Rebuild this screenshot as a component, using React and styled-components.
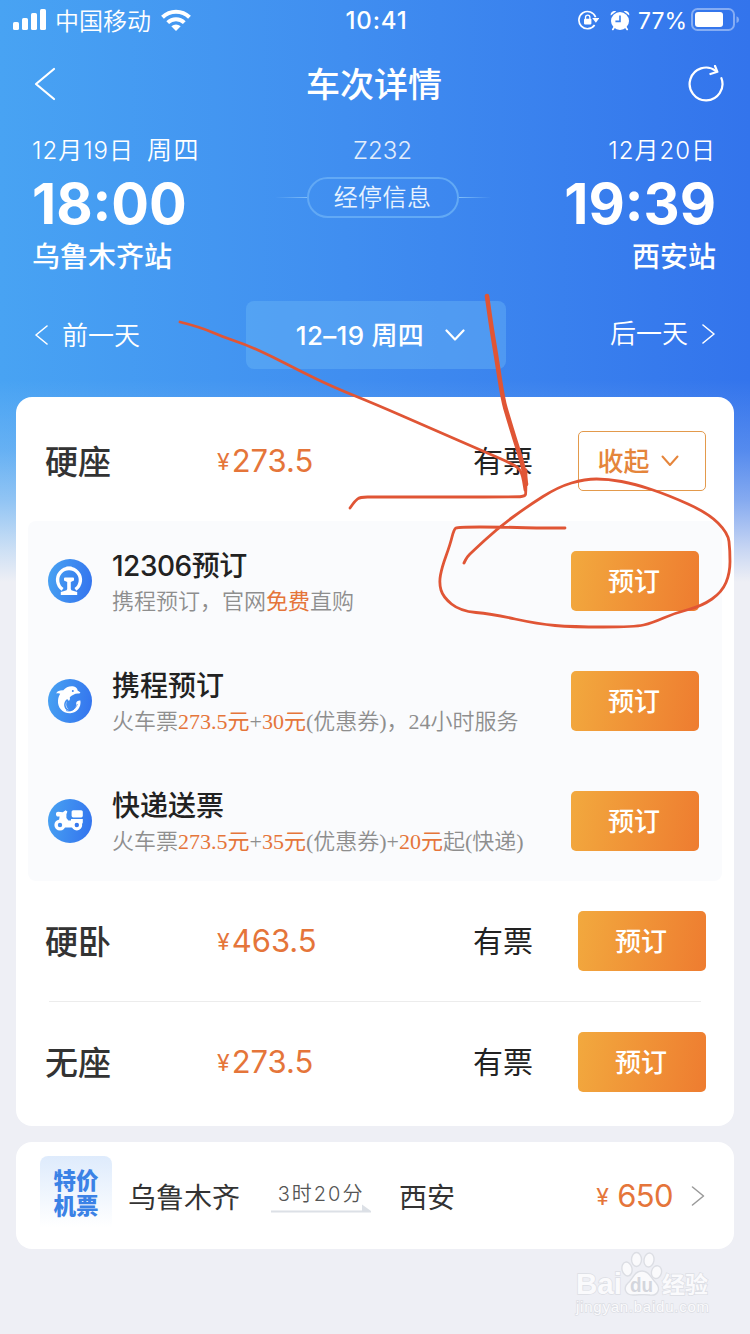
import React from 'react';
import styled, { createGlobalStyle } from 'styled-components';

const options = [
  {
    icon: 'rail',
    title: '12306预订',
    spacing: '-0.5px',
    text: [['携程预订，官网'], ['免费', true], ['直购']]
  },
  {
    icon: 'dolphin',
    title: '携程预订',
    text: [['火车票'], ['273.5元', true], ['+'], ['30元', true], ['(优惠券)，24小时服务']]
  },
  {
    icon: 'scooter',
    title: '快递送票',
    text: [['火车票'], ['273.5元', true], ['+'], ['35元', true], ['(优惠券)+'], ['20元', true], ['起(快递)']]
  }
];

const seats = [
  { name: '硬卧', price: '463.5' },
  { name: '无座', price: '273.5' }
];

const strokes = [
  [[180, 322], [200, 327], [223, 337], [247, 345], [273, 357], [300, 371], [333, 387], [375, 404], [430, 428], [485, 452], [515, 465], [522, 472], [525, 490]],
  [[526, 470], [526, 493], [525, 496], [518, 497], [450, 497], [375, 497], [360, 497], [355, 501], [350, 508]],
  [[565, 528], [532, 528], [502, 527], [458, 527], [454, 529], [450, 545], [442, 567], [439, 583], [443, 597], [460, 611], [492, 614], [538, 624], [572, 627], [635, 627], [652, 623], [675, 613], [702, 606], [722, 592], [730, 573], [730, 550], [728, 533], [708, 513], [668, 495], [635, 484], [608, 479], [585, 479], [558, 487], [528, 506], [498, 528], [472, 552], [467, 557], [464, 563]]
];
const arrowSide = [[487, 296], [491, 325], [496, 355], [503, 400], [508, 417], [515, 440], [523, 465], [526, 484]];

// smooth a list of points with quadratic segments through their midpoints
const toPath = (points) => {
  const last = points[points.length - 1];
  const mid = points.slice(1, -1).map(([x, y], i) => {
    const [nx, ny] = points[i + 2];
    return `Q${x} ${y} ${(x + nx) / 2} ${(y + ny) / 2}`;
  });
  return `M${points[0].join(' ')} ${mid.join(' ')} L${last.join(' ')}`;
};

const Chevron = ({ d, width, height, stroke = 2 }) => (
  <svg width={ width } height={ height } viewBox={ `0 0 ${width} ${height}` } fill="none" stroke="currentColor" strokeWidth={ stroke } strokeLinecap="round" strokeLinejoin="round">
    <path d={ d } />
  </svg>
);

const Signal = () => (
  <svg width="34" height="22" viewBox="0 0 34 22" fill="#fff">
    <rect x="0" y="13" width="6" height="8" rx="1.6" />
    <rect x="9" y="9" width="6" height="12" rx="1.6" />
    <rect x="18" y="4" width="6" height="17" rx="1.6" />
    <rect x="27" y="0" width="6" height="21" rx="1.6" />
  </svg>
);

const Wifi = () => (
  <svg width="30" height="22" viewBox="0 0 30 22" fill="none" stroke="#fff" strokeWidth="4">
    <path d="M1.5 8.3A19.4 19.4 0 0 1 28.5 8.3" />
    <path d="M6.7 13.6A12 12 0 0 1 23.3 13.6" />
    <path d="M10.3 17.2Q15 13.6 19.7 17.2L15 22Z" fill="#fff" stroke="none" />
  </svg>
);

const RotationLock = () => (
  <svg width="21" height="20" viewBox="0 0 21 20" fill="none" stroke="#fff" strokeWidth="1.7">
    <path d="M17.6 7.2A8.6 8.6 0 1 0 16.6 15" />
    <path d="M14.2 8H21.4L17.9 12.8Z" fill="#fff" stroke="none" />
    <rect x="6" y="8.8" width="7.4" height="5.6" rx="0.8" fill="#fff" stroke="none" />
    <path d="M7.5 9V7.4a2.2 2.2 0 0 1 4.4 0V9" strokeWidth="1.3" />
  </svg>
);

const Alarm = () => (
  <svg width="20" height="21" viewBox="0 0 20 21">
    <path d="M4.4 17L2.8 19.4M15.6 17L17.2 19.4" stroke="#fff" strokeWidth="1.8" strokeLinecap="round" />
    <path d="M0.8 5.6C0 2.6 3 0 6.3 1.2ZM19.2 5.6C20 2.6 17 0 13.7 1.2Z" fill="#fff" />
    <circle cx="10" cy="11" r="9" fill="#fff" />
    <path d="M10 5.6V11.4H5.4" fill="none" stroke="#3a80ee" strokeWidth="1.6" />
  </svg>
);

const Battery = () => (
  <svg width="49" height="24" viewBox="0 0 49 24">
    <rect x="1" y="1" width="42" height="21" rx="5.5" fill="none" stroke="#fff" strokeOpacity="0.4" strokeWidth="2" />
    <rect x="4" y="4" width="28" height="15" rx="3" fill="#fff" />
    <path d="M45.5 8.3q2.6 1 2.6 3.4t-2.6 3.4z" fill="#fff" fillOpacity="0.4" />
  </svg>
);

const Refresh = () => (
  <svg width="38" height="38" viewBox="0 0 38 38" fill="none" stroke="#fff" strokeWidth="2.2" strokeLinecap="round" strokeLinejoin="round">
    <path d="M34.4 13.2A16.4 16.4 0 1 1 28.8 5.8" />
    <path d="M28 1L30.4 6.8L23.4 9" />
  </svg>
);

const icons = {
  rail: (
    <g fill="none" stroke="#fff">
      <path d="M14.6 30.4A11.4 11.4 0 1 1 27.4 30.4" strokeWidth="3.4" />
      <path d="M16.5 10L18.5 7.4H23.5L25.5 10Z" fill="#fff" stroke="none" />
      <path d="M16 19.4Q16 18.4 17 18.4H25Q26 18.4 26 19.4V21.6L22.8 23V30Q23 31.4 25 31.8L29.2 33V36H12.8V33L17 31.8Q19 31.4 19.2 30V23L16 21.6Z" fill="#fff" stroke="none" />
    </g>
  ),
  dolphin: (
    <g fill="#fff">
      <path d="M8.2 14.2C9.5 12.2 12 11.2 15 11.4C18 8 22.5 6.4 26 7.6C28.6 8.4 29.4 10 29.6 11.5L32.2 13.2C32.6 14.2 31.5 14.6 29.8 14.6C26.5 14.8 24.2 16.2 21.8 18.2C22.2 19.6 21.8 21.4 20.6 22C20.4 20.8 19.6 20 18.6 20.4C15.6 23 15.2 28 18.6 31C21 32.6 24 32.2 26 30.2C28 28.4 28.4 26 28.2 24C28.4 22.4 30.4 21.2 32.4 21.6C33.4 28 29 34 22.4 34.2C14.2 34.4 9.4 28 10 21.4C10.2 18.6 11 16.6 12.2 14.8C11 14.2 9.6 14.6 8.2 14.2Z" />
      <path d="M19 22C17.4 25.2 18.2 28.8 21 30.4C18 29.8 16.4 25.4 19 22Z" />
      <circle cx="24.8" cy="12" r="1" fill="#3b82ee" />
      <path d="M18 31.5C22 33.3 27.4 31 29.4 25" fill="none" stroke="#3b82ee" strokeWidth="0.7" />
    </g>
  ),
  scooter: (
    <g fill="#fff">
      <path d="M8 16Q7.600 12.800 10.200 12.800L14.800 13.200L17.600 11.200L19.400 12.600L18.400 15.200V19L20.400 21.600H23V20H34.800V23.600L33.600 26L31 28.600H11V21.600L11.600 17.600H9Z" />
      <rect x="23.6" y="11.2" width="11.2" height="7.2" rx="1.6" />
      <circle cx="12" cy="26" r="5.6" />
      <circle cx="28.8" cy="26" r="5.4" />
      <circle cx="12" cy="26" r="2.2" fill="#438ff0" />
      <circle cx="28.8" cy="26" r="2.2" fill="#3878ee" />
    </g>
  )
};

const Annotation = () => (
  <Ink width="750" height="1334" viewBox="0 0 750 1334">
    { strokes.map((points, i) => <path key={ i } d={ toPath(points) } strokeWidth="2.8" />) }
    <path d={ toPath(arrowSide) } strokeWidth="4.6" />
  </Ink>
);

const Watermark = () => (
  <Mark width="150" height="74" viewBox="0 0 150 74">
    <g fill="#fafafc" stroke="#dcdee4" strokeWidth="1.4">
      <text x="6" y="47" fontSize="29" fontWeight="700" textLength="46" lengthAdjust="spacingAndGlyphs" paintOrder="stroke">Bai</text>
      <ellipse cx="57" cy="22" rx="5" ry="7" transform="rotate(-12 57 22)" />
      <ellipse cx="66.5" cy="12.5" rx="5" ry="7" />
      <ellipse cx="79" cy="13" rx="5" ry="7" transform="rotate(10 79 13)" />
      <ellipse cx="86.5" cy="25" rx="5" ry="6.5" transform="rotate(14 86 25)" />
      <path d="M72 24C64 24 63 32 58 36C53 41 55 48 63 48C69 48 74 47 80 48C88 49 91 42 86 36C81 31 79 24 72 24Z" />
      <text x="60" y="45" fontSize="20" fontWeight="700" fill="#d4d6dd" stroke="none" textLength="23" lengthAdjust="spacingAndGlyphs">du</text>
      <text x="92" y="46" fontSize="23" fontWeight="700" paintOrder="stroke">经验</text>
      <text x="6" y="65" fontSize="15" fontWeight="400" textLength="133" paintOrder="stroke">jingyan.baidu.com</text>
    </g>
  </Mark>
);

const App = () => (
  <Page>
    <GlobalStyle />
    <Hero>
      <StatusBar>
        <StatusLeft>
          <Signal />
          <Carrier>中国移动</Carrier>
          <Wifi />
        </StatusLeft>
        <Clock>10:41</Clock>
        <StatusRight>
          <RotationLock />
          <Alarm />
          <Percent>77%</Percent>
          <Battery />
        </StatusRight>
      </StatusBar>

      <NavBar>
        <Chevron width={ 22 } height={ 34 } d="M20 2L2 17L20 32" stroke={ 2.2 } />
        <NavTitle>车次详情</NavTitle>
        <Refresh />
      </NavBar>

      <Trip>
        <Stop>
          <StopDate>12月19日<Weekday>周四</Weekday></StopDate>
          <StopTime>18<Colon>:</Colon>00</StopTime>
          <Station>乌鲁木齐站</Station>
        </Stop>
        <Middle>
          <TrainNo>Z232</TrainNo>
          <StopsRow>
            <Line />
            <StopsButton>经停信息</StopsButton>
            <Line right />
          </StopsRow>
        </Middle>
        <Stop right>
          <StopDate>12月20日</StopDate>
          <StopTime>19<Colon>:</Colon>39</StopTime>
          <Station>西安站</Station>
        </Stop>
      </Trip>

      <DaySwitch>
        <DayLink>
          <Chevron width={ 14 } height={ 20 } d="M12 1L1 10L12 19" stroke={ 1.6 } />
          <DayText>前一天</DayText>
        </DayLink>
        <DayPicker>
          <DayText>12–19 周四</DayText>
          <Chevron width={ 20 } height={ 12 } d="M1.5 1.5L10 10.5L18.5 1.5" stroke={ 2.2 } />
        </DayPicker>
        <DayLink right>
          <DayText>后一天</DayText>
          <Chevron width={ 14 } height={ 20 } d="M2 1L13 10L2 19" stroke={ 1.6 } />
        </DayLink>
      </DaySwitch>
    </Hero>

    <Card>
      <SeatRow first>
        <SeatName>硬座</SeatName>
        <Price><Yen>¥</Yen>273.5</Price>
        <Stock>有票</Stock>
        <FoldButton>
          <DayText>收起</DayText>
          <Chevron width={ 18 } height={ 12 } d="M1.5 1.5L9 10L16.5 1.5" />
        </FoldButton>
      </SeatRow>
      <Panel>
        { options.map(o => (
          <Option key={ o.title }>
            <OptionIcon>
              <svg width="44" height="44" viewBox="0 0 44 44">{ icons[o.icon] }</svg>
            </OptionIcon>
            <OptionBody>
              <OptionTitle $spacing={ o.spacing }>{ o.title }</OptionTitle>
              <OptionText>
                { o.text.map(([part, hot], i) => hot ? <Hot key={ i }>{ part }</Hot> : part) }
              </OptionText>
            </OptionBody>
            <BookButton>预订</BookButton>
          </Option>
        )) }
      </Panel>
      { seats.map((s, i) => (
        <React.Fragment key={ s.name }>
          { i > 0 && <Divider /> }
          <SeatRow>
            <SeatName>{ s.name }</SeatName>
            <Price><Yen>¥</Yen>{ s.price }</Price>
            <Stock>有票</Stock>
            <BookButton>预订</BookButton>
          </SeatRow>
        </React.Fragment>
      )) }
    </Card>

    <FlightCard>
      <FlightBadge>特价<br />机票</FlightBadge>
      <City>乌鲁木齐</City>
      <Duration>
        3时20分
        <svg width="100" height="9" viewBox="0 0 100 9" fill="#dce0e6">
          <path d="M0 6.5H91V0.5L100 7V8.5H0Z" />
        </svg>
      </Duration>
      <City>西安</City>
      <FlightPrice><Yen flight>¥</Yen>650</FlightPrice>
      <Chevron width={ 14 } height={ 20 } d="M1.5 1L12.5 10L1.5 19" stroke={ 1.5 } />
    </FlightCard>

    <Watermark />
    <Annotation />
  </Page>
);

export default App;

const GlobalStyle = createGlobalStyle`
  * { box-sizing: border-box; }
  body {
    margin: 0;
    font-family: Inter, 'Noto Sans CJK SC', sans-serif;
    background: #eeeff5;
  }
  svg { display: block; flex-shrink: 0; }
`;
const Page = styled.div`
  position: relative;
  width: 750px;
  height: 1334px;
  overflow: hidden;
  background:
    linear-gradient(to bottom, transparent 380px, rgba(238, 239, 245, 0.05) 400px, rgba(238, 239, 245, 0.18) 450px, rgba(238, 239, 245, 0.44) 500px, rgba(238, 239, 245, 0.8) 550px, #eeeff5 582px),
    linear-gradient(to right, #48a3f3, #408ef0 46%, #3374ec);
`;
const Hero = styled.div`
  color: #fff;
`;
const StatusBar = styled.div`
  display: grid;
  grid-template-columns: 1fr auto 1fr;
  align-items: center;
  height: 42px;
  padding: 0 10px 2px 13px;
`;
const StatusLeft = styled.div`
  display: flex;
  align-items: center;
`;
const Carrier = styled.div`
  margin: -1px 10px 0 8px;
  font-size: 24px;
  font-weight: 350;
`;
const Clock = styled.div`
  padding-top: 1px;
  font-size: 24px;
  font-weight: 500;
  letter-spacing: 0.8px;
`;
const StatusRight = styled.div`
  display: flex;
  align-items: center;
  justify-content: flex-end;
  gap: 11px;
`;
const Percent = styled.div`
  margin: 0 -7px 0 -3px;
  padding-top: 1px;
  font-size: 23px;
`;
const NavBar = styled.div`
  display: flex;
  align-items: center;
  justify-content: space-between;
  height: 83px;
  padding: 0 25px 0 34px;
`;
const NavTitle = styled.div`
  padding: 0 0 2px 5px;
  font-size: 34px;
  font-weight: 500;
`;
const Trip = styled.div`
  display: grid;
  grid-template-columns: 1fr 232px 1fr;
  padding: 1px 34px 0 32px;
`;
const Stop = styled.div`
  text-align: ${props => props.right ? 'right' : 'left'};
`;
const StopDate = styled.div`
  height: 48px;
  padding-top: 1px;
  font-size: 24px;
  font-weight: 350;
  line-height: 47px;
  letter-spacing: 1px;
`;
const Weekday = styled.span`
  margin-left: 13px;
  font-size: 25px;
  line-height: 0;
  letter-spacing: 1.5px;
`;
const StopTime = styled.div`
  font-size: 56px;
  font-weight: 700;
  line-height: 60px;
`;
const Colon = styled.span`
  line-height: 0;
  vertical-align: 4px;
`;
const Station = styled.div`
  padding-top: 2px;
  font-size: 28px;
  font-weight: 500;
  line-height: 42px;
`;
const Middle = styled.div`
  display: flex;
  flex-direction: column;
  align-items: center;
  padding-left: 17px;
`;
const TrainNo = styled.div`
  height: 48px;
  padding-top: 1px;
  font-size: 24px;
  font-weight: 300;
  line-height: 48px;
  opacity: 0.85;
`;
const StopsRow = styled.div`
  display: flex;
  align-items: center;
  margin-top: 3px;
`;
const Line = styled.div`
  width: 32px;
  height: 1px;
  background: linear-gradient(${props => props.right ? 'to left' : 'to right'}, transparent, #7fbdf8);
`;
const StopsButton = styled.div`
  width: 152px;
  height: 41px;
  border: 2px solid #62a9f5;
  border-radius: 21px;
  font-size: 24px;
  font-weight: 350;
  line-height: 38px;
  letter-spacing: 0.4px;
  text-align: center;
  color: #e8f3ff;
`;
const DaySwitch = styled.div`
  display: grid;
  grid-template-columns: 1fr 260px 1fr;
  align-items: center;
  margin-top: 23px;
  padding: 0 34px 0 35px;
`;
const DayText = styled.div`
  padding-bottom: 4px;
`;
const DayLink = styled.div`
  display: flex;
  align-items: center;
  justify-content: ${props => props.right ? 'flex-end' : 'flex-start'};
  gap: 13px;
  padding: ${props => props.right ? '0 1px 3px 0' : '0'};
  font-size: 26px;
  font-weight: 350;
`;
const DayPicker = styled.div`
  display: flex;
  align-items: center;
  justify-content: center;
  gap: 21px;
  height: 68px;
  padding-left: 10px;
  border-radius: 8px;
  background: rgba(110, 184, 248, 0.4);
  font-size: 26px;
  font-weight: 500;
  letter-spacing: 0.3px;
`;
const Card = styled.div`
  height: 729px;
  margin: 28px 16px 0;
  border-radius: 16px;
  background: #fff;
`;
const SeatRow = styled.div`
  display: grid;
  grid-template-columns: 172px 256px 105px 128px;
  align-items: center;
  height: ${props => props.first ? 124 : 120}px;
  padding: ${props => props.first ? '4px 28px 0 29px' : '0 28px 0 29px'};
`;
const SeatName = styled.div`
  padding-bottom: 2px;
  font-size: 33px;
  font-weight: 500;
  color: #333;
`;
const Price = styled.div`
  padding-bottom: 1px;
  font-size: 31px;
  color: #e5753a;
`;
const Yen = styled.span`
  margin-right: ${props => props.flight ? 9 : 2}px;
  font-size: 23px;
  line-height: 0;
  vertical-align: 2px;
`;
const Stock = styled.div`
  padding-bottom: 4px;
  font-size: 30px;
  color: #222;
`;
const FoldButton = styled.div`
  display: flex;
  align-items: center;
  justify-content: center;
  gap: 11px;
  height: 60px;
  padding-right: 8px;
  border: 1px solid #e39a4c;
  border-radius: 5px;
  font-size: 26px;
  font-weight: 500;
  color: #e5853b;
`;
const Panel = styled.div`
  margin: 0 12px;
  border-radius: 8px;
  background: #fafbfd;
`;
const Option = styled.div`
  display: flex;
  align-items: center;
  height: 120px;
  padding: 0 23px 0 20px;
`;
const OptionIcon = styled.div`
  width: 44px;
  height: 44px;
  border-radius: 50%;
  background: linear-gradient(100deg, #48a3f2, #3372ee);
`;
const OptionBody = styled.div`
  flex: 1;
  padding: 5px 0 0 20px;
  white-space: nowrap;
`;
const OptionTitle = styled.div`
  font-size: 28px;
  font-weight: 500;
  line-height: 36px;
  letter-spacing: ${props => props.$spacing || 'normal'};
  color: #222;
`;
const OptionText = styled.div`
  font-family: 'Liberation Serif', 'Noto Sans CJK SC', serif;
  font-size: 22px;
  font-weight: 350;
  line-height: 35px;
  color: #8e8e8e;
`;
const Hot = styled.span`
  font-weight: 400;
  color: #e5753a;
`;
const BookButton = styled.div`
  width: 128px;
  height: 60px;
  padding-right: 2px;
  border-radius: 5px;
  background: linear-gradient(100deg, #f2a93e, #ee7c30);
  font-size: 26px;
  font-weight: 500;
  line-height: 61px;
  text-align: center;
  color: #fff;
`;
const Divider = styled.div`
  height: 1px;
  margin: 0 33px;
  background: #ececec;
`;
const FlightCard = styled.div`
  display: flex;
  align-items: center;
  height: 107px;
  margin: 16px 16px 0;
  padding: 0 29px 0 24px;
  border-radius: 16px;
  background: #fff;
  color: #999;
`;
const FlightBadge = styled.div`
  width: 72px;
  height: 79px;
  margin-right: 16px;
  padding-top: 12px;
  border-radius: 8px;
  background: linear-gradient(to bottom, #deebfc, #fff 90%);
  font-size: 22.5px;
  font-weight: 900;
  line-height: 25px;
  text-align: center;
  color: #3b82e6;
`;
const City = styled.div`
  font-size: 28px;
  color: #333;
`;
const Duration = styled.div`
  margin: 3px 28px 0 31px;
  font-size: 20px;
  font-weight: 350;
  line-height: 24px;
  letter-spacing: 2px;
  text-align: center;
  color: #555;

  svg { margin-top: -2px; }
`;
const FlightPrice = styled.div`
  margin: 0 18px 0 auto;
  font-size: 31px;
  letter-spacing: -0.6px;
  color: #e5753a;
`;
const Ink = styled.svg`
  position: absolute;
  top: 0;
  left: 0;
  pointer-events: none;
  fill: none;
  stroke: #e05535;
  stroke-linecap: round;
  stroke-linejoin: round;
`;
const Mark = styled.svg`
  position: absolute;
  right: 30px;
  bottom: 13px;
  font-family: 'Liberation Sans', 'Noto Sans CJK SC', sans-serif;
`;
